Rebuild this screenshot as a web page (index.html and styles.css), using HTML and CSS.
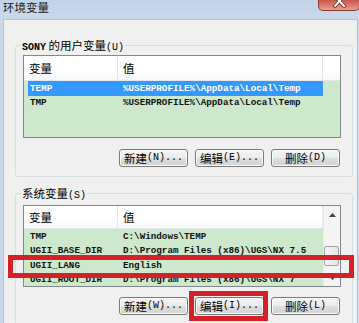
FILE: index.html
```html
<!DOCTYPE html>
<html lang="zh">
<head>
<meta charset="utf-8">
<title>环境变量</title>
<link rel="stylesheet" href="styles.css">
</head>
<body>
<div class="window">
  <div class="titlebar">
    <span class="title">环境变量</span>
    <div class="close">
      <svg width="42" height="11" viewBox="0 0 42 11">
        <path d="M17 -4 L26 6 M26 -4 L17 6" stroke="#6a2a22" stroke-width="3.6" stroke-linecap="square"/>
        <path d="M17 -4 L26 6 M26 -4 L17 6" stroke="#ffffff" stroke-width="2" stroke-linecap="square"/>
      </svg>
    </div>
  </div>
  <div class="panel">
    <fieldset class="group group-user">
      <legend><span class="lat">SONY</span> 的用户变量<span class="acc">(U)</span></legend>
      <div class="group-body body-user">
        <div class="list list-user">
          <div class="list-head head-user">
            <div class="hcell hc1">变量</div>
            <div class="hcell hc2">值</div>
            <div class="hcell hfill"></div>
          </div>
          <div class="row sel"><span class="c1">TEMP</span><span class="c2">%USERPROFILE%\AppData\Local\Temp</span></div>
          <div class="row"><span class="c1">TMP</span><span class="c2">%USERPROFILE%\AppData\Local\Temp</span></div>
        </div>
        <div class="buttons">
          <button class="btn">新建<span class="acc">(N)...</span></button>
          <button class="btn">编辑<span class="acc">(E)...</span></button>
          <button class="btn">删除<span class="acc">(D)</span></button>
        </div>
      </div>
    </fieldset>
    <fieldset class="group group-sys">
      <legend>系统变量<span class="acc">(S)</span></legend>
      <div class="group-body body-sys">
        <div class="list list-sys">
          <div class="list-main">
            <div class="list-head head-sys">
              <div class="hcell hc1">变量</div>
              <div class="hcell hc2">值</div>
            </div>
            <div class="rows-sys">
              <div class="row"><span class="c1">TMP</span><span class="c2">C:\Windows\TEMP</span></div>
              <div class="row"><span class="c1">UGII_BASE_DIR</span><span class="c2">D:\Program Files (x86)\UGS\NX 7.5</span></div>
              <div class="row"><span class="c1">UGII_LANG</span><span class="c2">English</span></div>
              <div class="row"><span class="c1">UGII_ROOT_DIR</span><span class="c2">D:\Program Files (x86)\UGS\NX 7</span></div>
            </div>
          </div>
          <div class="scrollbar">
            <div class="sb-btn">
              <svg width="7" height="4" viewBox="0 0 7 4"><path d="M0 4 L3.5 0 L7 4 Z" fill="#404040"/></svg>
            </div>
            <div class="sb-track"><div class="sb-thumb"></div></div>
            <div class="sb-btn">
              <svg width="7" height="4" viewBox="0 0 7 4"><path d="M0 0 L3.5 4 L7 0 Z" fill="#404040"/></svg>
            </div>
          </div>
        </div>
        <div class="buttons buttons-sys">
          <button class="btn">新建<span class="acc">(W)...</span></button>
          <button class="btn">编辑<span class="acc">(I)...</span></button>
          <button class="btn">删除<span class="acc">(L)</span></button>
        </div>
      </div>
    </fieldset>
  </div>
  <div class="mark mark-row"></div>
  <div class="mark mark-btn"></div>
</div>
</body>
</html>
```
FILE: styles.css
```css
* { box-sizing: border-box; }
html, body { margin: 0; padding: 0; }
body {
  width: 359px;
  height: 323px;
  overflow: hidden;
  background: #c6d7eb;
  font-family: "Noto Sans CJK SC", "Liberation Sans", sans-serif;
  font-size: 11px;
  color: #000;
}
.window {
  position: relative;
  width: 359px;
  height: 323px;
  overflow: hidden;
  background: linear-gradient(180deg, #c2d4ea 0, #cbd9ea 19px, #c8d7e9 100%);
}
.titlebar {
  height: 19px;
  display: flex;
  align-items: flex-start;
}
.title {
  margin: 0 0 0 3px;
  font-size: 11.5px;
  line-height: 15px;
  color: #1b1b1b;
}
.close {
  margin-left: auto;
  width: 42px;
  height: 11px;
  border: 1px solid #8a3b30;
  border-top: none;
  border-radius: 0 0 5px 5px;
  background: linear-gradient(180deg, #c9574a 0%, #d9806f 60%, #e7a493 100%);
  overflow: hidden;
  margin-right: -1px;
}
.close svg { display: block; margin-left: -1px; }

.panel {
  margin-left: 3px;
  width: 355px;
  height: 304px;
  background: #f0f0f0;
  border: 1px solid #b3c2d3;
  border-bottom: none;
  padding-top: 0;
  display: flow-root;
}
.group {
  margin: 19px 4px 0 11px;
  padding: 0;
  border: 1px solid #d5dfe5;
  border-radius: 3px;
  min-width: 0;
}
.group-sys { margin-top: 10px; }
.group legend {
  margin-left: 5px;
  padding: 0 1px;
  height: 12px;
  line-height: 12px;
  font-size: 11.5px;
  color: #000;
}
.lat {
  font-family: "Liberation Mono", monospace;
  font-size: 10px;
  font-weight: bold;
}
.acc {
  font-family: "Liberation Mono", monospace;
  font-size: 10px;
}
.group-body { padding: 4px 11px 9px 7px; }
.body-sys { padding-top: 6px; }

.list {
  width: 318px;
  border: 1px solid #828790;
  background: #cde8cd;
  overflow: hidden;
}
.list-user { height: 83px; }
.list-sys { height: 82px; display: flex; }
.list-main { width: 299px; overflow: hidden; }

.list-head {
  display: flex;
  background: linear-gradient(180deg, #ffffff 0%, #ffffff 60%, #f7f8f9 100%);
  border-bottom: 1px solid #e3e6ea;
}
.head-user { height: 25px; }
.head-sys { height: 23px; }
.hcell {
  display: flex;
  align-items: center;
  padding-left: 5px;
  border-right: 1px solid #e3e6ea;
  font-size: 11.5px;
}
.hc1 { width: 94px; }
.hc2 { width: 205px; }
.hfill { flex: 1; border-right: none; }

.row {
  display: flex;
  align-items: center;
  margin-left: 4px;
  width: 295px;
  height: 14.5px;
  font-family: "Liberation Mono", monospace;
  font-size: 9.25px;
  font-weight: bold;
  white-space: nowrap;
  color: #111;
}
.row.sel { background: #3399ff; color: #fff; }
.c1 { width: 90px; padding-left: 2px; overflow: hidden; }
.c2 { width: 205px; padding-left: 5px; overflow: hidden; }

.scrollbar {
  width: 17px;
  display: flex;
  flex-direction: column;
  background: #f4f4f4;
  border-left: 1px solid #ececec;
}
.sb-btn {
  height: 17px;
  display: flex;
  align-items: center;
  justify-content: center;
}
.sb-track { flex: 1; padding: 23px 1px 0 0; }
.sb-thumb {
  height: 20px;
  border: 1px solid #a4a4a4;
  border-radius: 2px;
  background: linear-gradient(90deg, #f4f4f4 0%, #e6e6e6 100%);
}

.buttons {
  display: flex;
  justify-content: flex-end;
  gap: 7px;
  margin-top: 11px;
  padding-right: 1px;
}
.buttons-sys { margin-top: 10px; }
.btn {
  width: 69px;
  height: 18px;
  padding: 0;
  display: flex;
  align-items: center;
  justify-content: center;
  border: 1px solid #7a7a7a;
  border-radius: 3px;
  background: linear-gradient(180deg, #f4f4f4 0%, #ececec 48%, #dedede 52%, #d2d2d2 100%);
  box-shadow: inset 0 0 0 1px #fafafa;
  font-family: "Noto Sans CJK SC", sans-serif;
  font-size: 11.5px;
  line-height: 14px;
  color: #000;
}

.mark {
  position: absolute;
  border: 5px solid #d42027;
}
.mark-row { left: 8px; top: 255px; width: 346px; height: 23px; }
.mark-btn { left: 189px; top: 291px; width: 79px; height: 30px; }
```
